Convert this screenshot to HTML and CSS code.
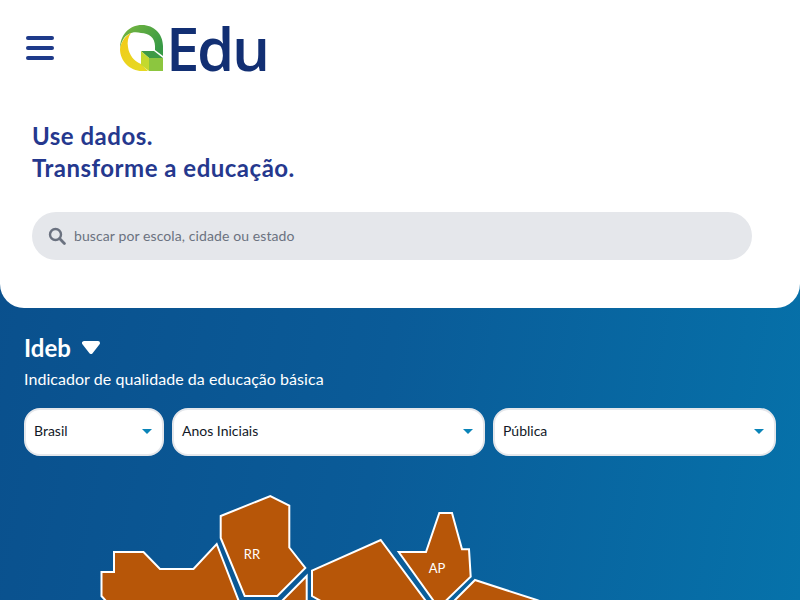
FILE: index.html
```html
<!DOCTYPE html>
<html lang="pt-BR">
<head>
  <meta charset="UTF-8" />
  <title>QEdu</title>
  <link rel="stylesheet" href="styles.css">
</head>
<body>
  <header class="topo">
    <div class="barra">
      <button class="menu" aria-label="Menu">
        <span></span>
        <span></span>
        <span></span>
      </button>
      <a class="logo" href="#">
        <svg class="logo-q" viewBox="0 0 44 47" width="44" height="47">
          <defs>
            <linearGradient id="verde" x1="0" y1="0" x2="1" y2="0.6">
              <stop offset="0" stop-color="#7cb83e" />
              <stop offset="1" stop-color="#389a46" />
            </linearGradient>
            <linearGradient id="amarelo" x1="0" y1="0" x2="0.6" y2="1">
              <stop offset="0" stop-color="#f5c915" />
              <stop offset="1" stop-color="#e6d822" />
            </linearGradient>
          </defs>
          <path fill="url(#verde)" d="M0 24C0 10 9 0 22 0C34 0 43 9 43 21V31L35 25V21C35 13 29 8 21 8C17 7 12 7 9 9C4 11 1 17 0 24Z" />
          <path fill="url(#amarelo)" d="M0 24C1 17 5 11 11 8C8 12 7 17 8 22C9 30 14 36 21 39L28 46H22C10 46 0 36 0 24Z" />
          <path fill="#3d9a45" d="M21 26H34L43 33H29Z" />
          <path fill="#c4d92e" d="M21 26L29 33V46L21 40Z" />
          <path fill="#8cc63f" d="M29 33H43V46H29Z" />
        </svg>
        <span class="logo-texto">Edu</span>
      </a>
    </div>
    <h1>Use dados.<br>Transforme a educação.</h1>
    <div class="busca">
      <svg viewBox="0 0 18 18" width="18" height="18">
        <circle cx="7.5" cy="7.5" r="5.5" fill="none" stroke="#6b7280" stroke-width="2.4" />
        <path d="M11.8 11.8L16.4 16.4" stroke="#6b7280" stroke-width="2.8" stroke-linecap="round" />
      </svg>
      <span>buscar por escola, cidade ou estado</span>
    </div>
  </header>

  <main class="painel">
    <h2>Ideb
      <svg viewBox="0 0 18 13" width="18" height="13">
        <path fill="#fff" stroke="#fff" stroke-width="4" stroke-linejoin="round" d="M2 2H16L9 11Z" />
      </svg>
    </h2>
    <p>Indicador de qualidade da educação básica</p>
    <div class="filtros">
      <div class="filtro f-local">Brasil<i></i></div>
      <div class="filtro f-etapa">Anos Iniciais<i></i></div>
      <div class="filtro f-rede">Pública<i></i></div>
    </div>
    <svg class="mapa" viewBox="0 0 800 144" width="800" height="144">
      <!-- y do mapa = y da tela - 456 -->
      <g class="estados">
        <polygon points="101.5,116 114,116 114,96 143.5,96 160,113 193.5,113 216.7,88 243,156 116,156 101.5,140" />
        <polygon points="220.7,60 270.3,40 289.3,49.5 289.3,91.5 305.3,112 277.3,140 244.7,140 220.7,82" />
        <polygon points="306.7,120 306.7,156 271,156" />
        <polygon points="312,114.7 380.7,84 434,156 340,156 312,140" />
        <polygon points="398.7,96 426,96 439.3,57 452,57 462,93.3 469,93.3 470.7,120.7 438.6,151.8" />
        <polygon points="475,124 536.7,144 570,156 443,156" />
      </g>
      <text x="252" y="103">RR</text>
      <text x="437" y="117">AP</text>
    </svg>
  </main>
</body>
</html>
```

FILE: styles.css
```css
* {
  box-sizing: border-box;
}
html, body {
  height: 100%;
}
body {
  margin: 0;
  overflow: hidden;
  font-family: "Lato", "Noto Sans", sans-serif;
  background: linear-gradient(100deg, #0a4f8c 0%, #0a5b98 50%, #0672aa 100%);
}
.topo {
  height: 308px;
  padding: 24px 32px 0;
  background-color: white;
  border-radius: 0 0 24px 24px;
}
.barra {
  display: flex;
  align-items: flex-start;
  height: 72px;
}
.menu {
  display: flex;
  flex-direction: column;
  gap: 6px;
  width: 28px;
  margin: 12px 0 0 -6px;
  padding: 0;
  border: none;
  background: none;
}
.menu span {
  display: block;
  height: 4px;
  border-radius: 2px;
  background-color: #1e3a8a;
}
.logo {
  display: flex;
  align-items: flex-start;
  margin: 1px 0 0 66px;
  text-decoration: none;
}
.logo-texto {
  margin: -17px 0 0 2px;
  font-family: "Open Sans", sans-serif;
  font-size: 60px;
  font-weight: 600;
  line-height: 80px;
  letter-spacing: -2.4px;
  color: #122f73;
}
h1 {
  margin: 24px 0 28px;
  font-size: 24px;
  font-weight: 700;
  line-height: 32px;
  letter-spacing: 0.5px;
  color: #25388e;
}
.busca {
  display: flex;
  align-items: center;
  gap: 8px;
  width: 720px;
  height: 48px;
  padding: 0 16px;
  border-radius: 24px;
  background-color: #e5e7eb;
  font-size: 14px;
  line-height: 18px;
  letter-spacing: 0.1px;
  color: #6b7280;
}
.busca span {
  margin-top: -1px;
}
.painel {
  padding: 23px 24px 0;
  color: white;
}
h2 {
  display: flex;
  align-items: center;
  gap: 11px;
  margin: 0 0 4px;
  height: 32px;
  font-size: 24px;
  font-weight: 700;
}
.painel p {
  margin: 0 0 17px;
  font-size: 16px;
  font-weight: 400;
  line-height: 24px;
  letter-spacing: 0.05px;
}
.filtros {
  display: flex;
  gap: 8px;
}
.filtro {
  position: relative;
  height: 48px;
  padding: 0 8px;
  border: 2px solid #e5e7eb;
  border-radius: 16px;
  background-color: white;
  font-size: 14px;
  line-height: 42px;
  color: #111827;
}
.filtro i {
  position: absolute;
  right: 10px;
  top: 19px;
  border-style: solid;
  border-width: 5px 5px 0;
  border-color: #0a84b8 transparent transparent;
}
.f-local {
  width: 140px;
}
.f-etapa {
  width: 313px;
}
.f-rede {
  width: 283px;
}
.mapa {
  display: block;
  margin-left: -24px;
}
.estados polygon {
  fill: #b75608;
  stroke: white;
  stroke-width: 2;
}
.mapa text {
  fill: white;
  font-size: 13px;
  text-anchor: middle;
}
```
